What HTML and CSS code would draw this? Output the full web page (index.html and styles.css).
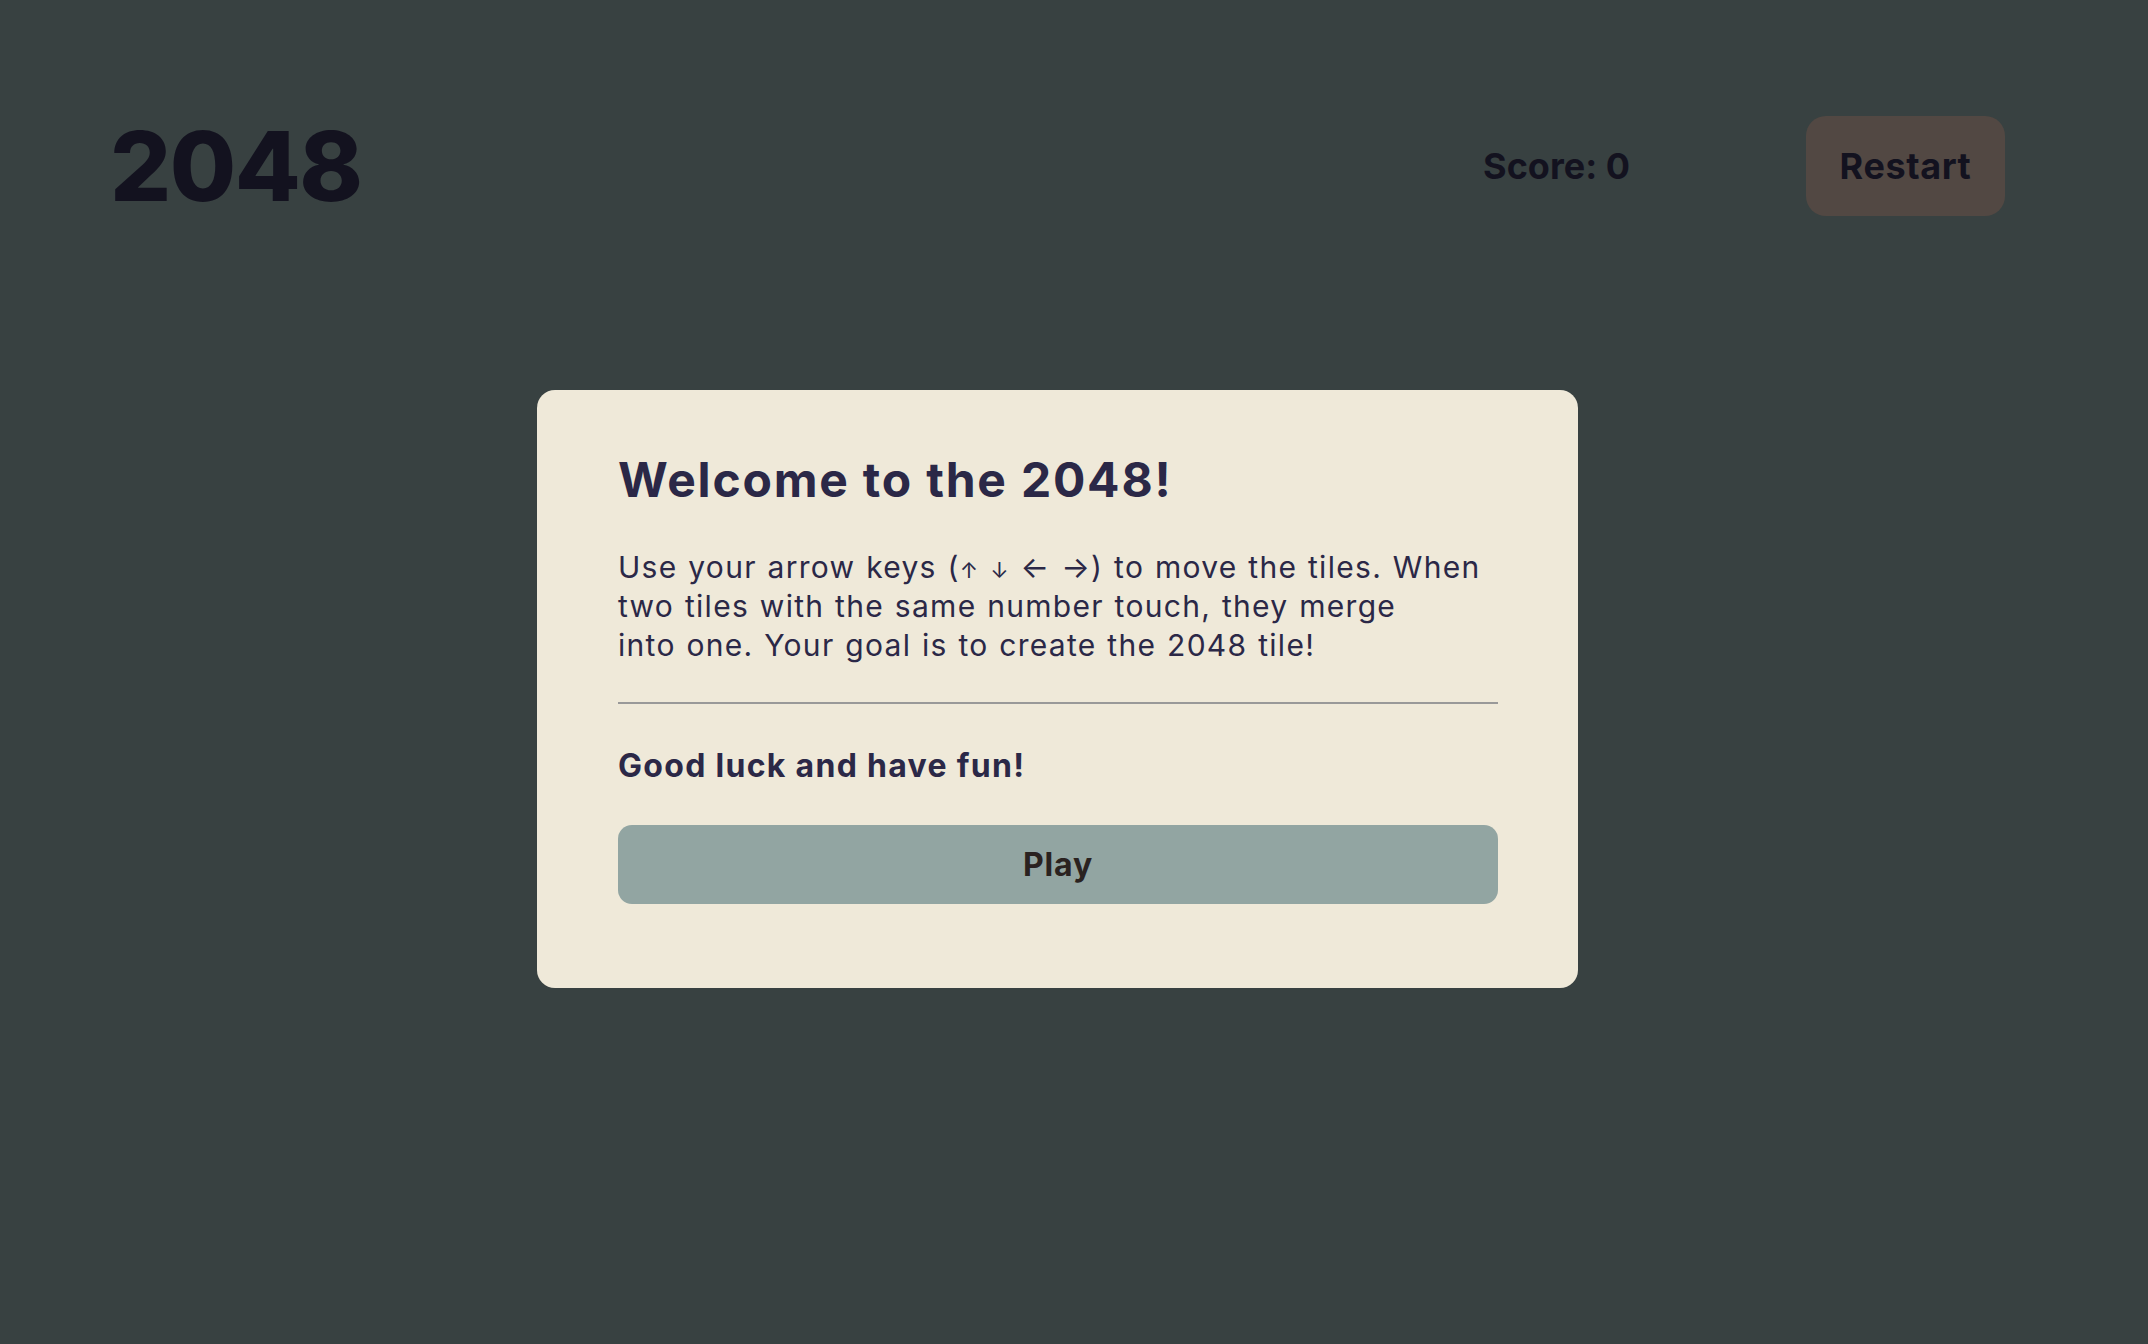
FILE: index.html
```html
<!DOCTYPE html>
<html lang="en">
<head>
<meta charset="utf-8">
<title>2048</title>
<link rel="stylesheet" href="styles.css">
</head>
<body>
<div class="page">
  <header class="header">
    <h1 class="logo">2048</h1>
    <div class="controls">
      <div class="score">Score: 0</div>
      <button class="restart">Restart</button>
    </div>
  </header>
  <main class="main">
    <section class="modal">
      <h2 class="modal-title">Welcome to the 2048!</h2>
      <p class="modal-text">Use your arrow keys (<span class="small-arrow">↑</span> <span class="small-arrow">↓</span> ← →) to move the tiles. When<br>two tiles with the same number touch, they merge<br>into one. Your goal is to create the 2048 tile!</p>
      <hr class="divider">
      <p class="modal-luck">Good luck and have fun!</p>
      <button class="play">Play</button>
    </section>
  </main>
</div>
</body>
</html>
```
FILE: styles.css
```css
html, body {
  margin: 0;
  padding: 0;
  height: 100%;
}
body {
  background: #384141;
  font-family: Inter, "Noto Sans", sans-serif;
}
.page {
  padding: 0 143px 0 110px;
}
.header {
  display: flex;
  align-items: center;
  justify-content: space-between;
  padding-top: 116px;
  height: 100px;
}
.logo {
  margin: 0;
  font-size: 96px;
  font-weight: 800;
  color: #13121f;
  letter-spacing: -1.5px;
  line-height: 1;
}
.controls {
  display: flex;
  align-items: center;
  gap: 176px;
}
.score {
  font-size: 36px;
  font-weight: 700;
  color: #13121f;
}
.restart {
  width: 199px;
  height: 100px;
  border: none;
  border-radius: 20px;
  background: #524843;
  color: #13121f;
  font-family: inherit;
  font-size: 36px;
  font-weight: 700;
  letter-spacing: 0.6px;
  padding: 0;
}
.main {
  display: flex;
  justify-content: center;
  padding-top: 174px;
}
.modal {
  width: 1041px;
  box-sizing: border-box;
  background: #efe9d9;
  border-radius: 18px;
  padding: 56px 80px 84px 81px;
}
.modal-title {
  margin: 0;
  font-size: 48px;
  font-weight: 700;
  color: #2b2847;
  letter-spacing: 1.8px;
  line-height: 1.4;
}
.modal-text {
  margin: 35px 0 0;
  font-size: 30px;
  line-height: 39px;
  letter-spacing: 1.3px;
  word-spacing: 1px;
  color: #2b2847;
  font-weight: 400;
}
.small-arrow {
  font-size: 22px;
  line-height: 1;
}
.divider {
  margin: 37px 0 0;
  border: none;
  height: 2px;
  background: #999999;
}
.modal-luck {
  margin: 42px 0 0;
  font-size: 32px;
  font-weight: 700;
  letter-spacing: 1.3px;
  color: #2b2847;
}
.play {
  display: block;
  width: 100%;
  height: 79px;
  margin-top: 40px;
  border: none;
  border-radius: 14px;
  background: #92a5a2;
  color: #2a2220;
  font-family: inherit;
  font-size: 32px;
  font-weight: 700;
  letter-spacing: 0.8px;
}
```
